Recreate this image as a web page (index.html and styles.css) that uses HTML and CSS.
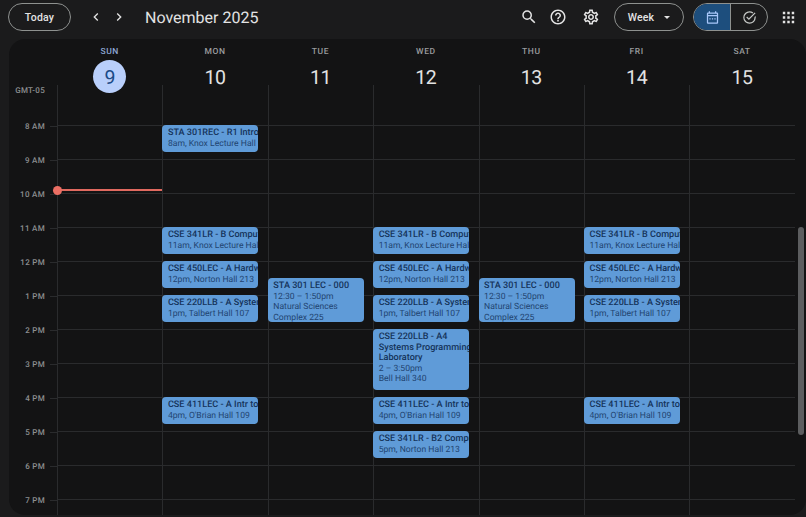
FILE: index.html
```html
<!DOCTYPE html>
<html lang="en">
<head>
  <meta charset="UTF-8" />
  <meta name="viewport" content="width=device-width, initial-scale=1.0" />
  <title>Calendar - Week</title>
  <link rel="stylesheet" href="styles.css">
</head>
<body>
  <header class="topbar">
    <button class="pill today">Today</button>
    <div class="nav-arrows">
      <svg viewBox="0 0 24 24"><path d="M15.4 7.4 14 6l-6 6 6 6 1.4-1.4-4.6-4.6z"/></svg>
      <svg viewBox="0 0 24 24"><path d="M8.6 16.6 10 18l6-6-6-6-1.4 1.4 4.6 4.6z"/></svg>
    </div>
    <h1 class="month">November 2025</h1>
    <div class="tools">
      <svg class="tool search" viewBox="0 0 24 24"><path d="M15.5 14h-.79l-.28-.27A6.471 6.471 0 0 0 16 9.5 6.5 6.5 0 1 0 9.5 16c1.61 0 3.09-.59 4.23-1.57l.27.28v.79l5 4.99L20.49 19l-4.99-5zm-6 0C7.01 14 5 11.99 5 9.5S7.01 5 9.5 5 14 7.01 14 9.5 11.99 14 9.5 14z"/></svg>
      <svg class="tool" viewBox="0 0 24 24"><path d="M11 18h2v-2h-2v2zm1-16C6.48 2 2 6.48 2 12s4.48 10 10 10 10-4.48 10-10S17.52 2 12 2zm0 18c-4.41 0-8-3.59-8-8s3.59-8 8-8 8 3.59 8 8-3.59 8-8 8zm0-14c-2.21 0-4 1.79-4 4h2c0-1.1.9-2 2-2s2 .9 2 2c0 2-3 1.75-3 5h2c0-2.25 3-2.5 3-5 0-2.21-1.79-4-4-4z"/></svg>
      <svg class="tool" viewBox="0 0 24 24"><path d="M19.43 12.98c.04-.32.07-.64.07-.98 0-.34-.03-.66-.07-.98l2.11-1.65c.19-.15.24-.42.12-.64l-2-3.46c-.09-.16-.26-.25-.44-.25-.06 0-.12.01-.17.03l-2.49 1c-.52-.4-1.08-.73-1.69-.98l-.38-2.65C14.46 2.18 14.25 2 14 2h-4c-.25 0-.46.18-.49.42l-.38 2.65c-.61.25-1.17.59-1.69.98l-2.49-1c-.06-.02-.12-.03-.18-.03-.17 0-.34.09-.43.25l-2 3.46c-.13.22-.07.49.12.64l2.11 1.65c-.04.32-.07.65-.07.98 0 .33.03.66.07.98l-2.11 1.65c-.19.15-.24.42-.12.64l2 3.46c.09.16.26.25.44.25.06 0 .12-.01.17-.03l2.49-1c.52.4 1.08.73 1.69.98l.38 2.65c.03.24.24.42.49.42h4c.25 0 .46-.18.49-.42l.38-2.65c.61-.25 1.17-.59 1.69-.98l2.49 1c.06.02.12.03.18.03.17 0 .34-.09.43-.25l2-3.46c.12-.22.07-.49-.12-.64l-2.11-1.65zm-1.98-1.71c.04.31.05.52.05.73 0 .21-.02.43-.05.73l-.14 1.13.89.7 1.08.84-.7 1.21-1.27-.51-1.04-.42-.9.68c-.43.32-.84.56-1.25.73l-1.06.43-.16 1.13-.2 1.35h-1.4l-.19-1.35-.16-1.13-1.06-.43c-.43-.18-.83-.41-1.23-.71l-.91-.7-1.06.43-1.27.51-.7-1.21 1.08-.84.89-.7-.14-1.13c-.03-.31-.05-.54-.05-.74s.02-.43.05-.73l.14-1.13-.89-.7-1.08-.84.7-1.21 1.27.51 1.04.42.9-.68c.43-.32.84-.56 1.25-.73l1.06-.43.16-1.13.2-1.35h1.39l.19 1.35.16 1.13 1.06.43c.43.18.83.41 1.23.71l.91.7 1.06-.43 1.27-.51.7 1.21-1.07.85-.89.7.14 1.13zM12 8c-2.21 0-4 1.79-4 4s1.79 4 4 4 4-1.79 4-4-1.79-4-4-4zm0 6c-1.1 0-2-.9-2-2s.9-2 2-2 2 .9 2 2-.9 2-2 2z"/></svg>
    </div>
    <button class="pill week">Week<span class="caret"></span></button>
    <div class="switch">
      <span class="switch-part on">
        <svg viewBox="0 0 24 24"><path d="M5 22c-1.100 0-2-.9-2-2V6c0-1.100.9-2 2-2h1V2h2v2h8V2h2v2h1c1.100 0 2 .9 2 2v14c0 1.100-.9 2-2 2H5zm0-2h14V10H5v10zM5 8h14V6H5v2zm2 5h2v2H7zm4 0h2v2h-2zm4 0h2v2h-2z"/></svg>
      </span>
      <span class="switch-part">
        <svg viewBox="0 0 24 24"><path d="M12 2a10 10 0 1 0 10 10c0-.9-.1-1.700-.3-2.500l-1.700 1.700c0 .3 0 .5 0 .8a8 8 0 1 1-3.300-6.500l1.400-1.400A9.900 9.900 0 0 0 12 2zm8.300 1.900L11 13.200 8.200 10.400 6.800 11.800 11 16l10.700-10.700z"/></svg>
      </span>
    </div>
    <svg class="apps" viewBox="0 0 16 16"><path d="M1 1h3v3H1zM6.500 1h3v3h-3zM12 1h3v3h-3zM1 6.500h3v3H1zM6.500 6.500h3v3h-3zM12 6.500h3v3h-3zM1 12h3v3H1zM6.500 12h3v3h-3zM12 12h3v3h-3z"/></svg>
  </header>

  <main class="panel">
    <div class="week-head">
      <div class="day-head today-col"><span class="dow">Sun</span><span class="date">9</span></div>
      <div class="day-head"><span class="dow">Mon</span><span class="date">10</span></div>
      <div class="day-head"><span class="dow">Tue</span><span class="date">11</span></div>
      <div class="day-head"><span class="dow">Wed</span><span class="date">12</span></div>
      <div class="day-head"><span class="dow">Thu</span><span class="date">13</span></div>
      <div class="day-head"><span class="dow">Fri</span><span class="date">14</span></div>
      <div class="day-head"><span class="dow">Sat</span><span class="date">15</span></div>
    </div>

    <div class="week-grid">
      <div class="times">
        <span class="tz">GMT-05</span>
        <div class="hour"><span>8 AM</span></div>
        <div class="hour"><span>9 AM</span></div>
        <div class="hour"><span>10 AM</span></div>
        <div class="hour"><span>11 AM</span></div>
        <div class="hour"><span>12 PM</span></div>
        <div class="hour"><span>1 PM</span></div>
        <div class="hour"><span>2 PM</span></div>
        <div class="hour"><span>3 PM</span></div>
        <div class="hour"><span>4 PM</span></div>
        <div class="hour"><span>5 PM</span></div>
        <div class="hour"><span>6 PM</span></div>
        <div class="hour"><span>7 PM</span></div>
      </div>

      <!-- Sunday -->
      <div class="day">
        <div class="now-line" style="top: 104px"></div>
      </div>

      <!-- Monday -->
      <div class="day">
        <div class="event" style="top: 40px; height: 27px"><b>STA 301REC - R1 Intro to Probability</b><span>8am, Knox Lecture Hall 110</span></div>
        <div class="event" style="top: 142px; height: 27px"><b>CSE 341LR - B Computer Organization</b><span>11am, Knox Lecture Hall 110</span></div>
        <div class="event" style="top: 176px; height: 27px"><b>CSE 450LEC - A Hardware</b><span>12pm, Norton Hall 213</span></div>
        <div class="event" style="top: 210px; height: 27px"><b>CSE 220LLB - A Systems Programming</b><span>1pm, Talbert Hall 107</span></div>
        <div class="event" style="top: 312px; height: 27px"><b>CSE 411LEC - A Intr to Networks</b><span>4pm, O'Brian Hall 109</span></div>
      </div>

      <!-- Tuesday -->
      <div class="day">
        <div class="event" style="top: 193px; height: 44px"><b>STA 301 LEC - 000</b><span>12:30 – 1:50pm</span><span class="wrap">Natural Sciences Complex 225</span></div>
      </div>

      <!-- Wednesday -->
      <div class="day">
        <div class="event" style="top: 142px; height: 27px"><b>CSE 341LR - B Computer Organization</b><span>11am, Knox Lecture Hall 110</span></div>
        <div class="event" style="top: 176px; height: 27px"><b>CSE 450LEC - A Hardware</b><span>12pm, Norton Hall 213</span></div>
        <div class="event" style="top: 210px; height: 27px"><b>CSE 220LLB - A Systems Programming</b><span>1pm, Talbert Hall 107</span></div>
        <div class="event" style="top: 244px; height: 61px"><b class="wrap">CSE 220LLB - A4 Systems Programming Laboratory</b><span>2 – 3:50pm</span><span>Bell Hall 340</span></div>
        <div class="event" style="top: 312px; height: 27px"><b>CSE 411LEC - A Intr to Networks</b><span>4pm, O'Brian Hall 109</span></div>
        <div class="event" style="top: 346px; height: 27px"><b>CSE 341LR - B2 Computer Organization</b><span>5pm, Norton Hall 213</span></div>
      </div>

      <!-- Thursday -->
      <div class="day">
        <div class="event" style="top: 193px; height: 44px"><b>STA 301 LEC - 000</b><span>12:30 – 1:50pm</span><span class="wrap">Natural Sciences Complex 225</span></div>
      </div>

      <!-- Friday -->
      <div class="day">
        <div class="event" style="top: 142px; height: 27px"><b>CSE 341LR - B Computer Organization</b><span>11am, Knox Lecture Hall 110</span></div>
        <div class="event" style="top: 176px; height: 27px"><b>CSE 450LEC - A Hardware</b><span>12pm, Norton Hall 213</span></div>
        <div class="event" style="top: 210px; height: 27px"><b>CSE 220LLB - A Systems Programming</b><span>1pm, Talbert Hall 107</span></div>
        <div class="event" style="top: 312px; height: 27px"><b>CSE 411LEC - A Intr to Networks</b><span>4pm, O'Brian Hall 109</span></div>
      </div>

      <!-- Saturday -->
      <div class="day"></div>
    </div>

    <div class="scrollbar"></div>
  </main>
</body>
</html>
```

FILE: styles.css
```css
* {
  box-sizing: border-box;
}
body {
  margin: 0;
  height: 517px;
  overflow: hidden;
  background: #1b1b1c;
  color: #e3e3e3;
  font-family: 'Roboto', 'Liberation Sans', sans-serif;
  text-rendering: geometricPrecision;
}

/* Top bar */
.topbar {
  display: flex;
  align-items: center;
  height: 39px;
  padding: 0 0 5px 8px;
}
.pill {
  height: 28px;
  border: 1px solid #8e918f;
  border-radius: 14px;
  background: none;
  color: #e3e3e3;
  font: 500 10.5px 'Roboto', sans-serif;
  letter-spacing: 0.2px;
  padding: 0;
}
.today {
  width: 63px;
}
.nav-arrows {
  display: flex;
  gap: 7px;
  margin-left: 17px;
}
.nav-arrows svg {
  width: 16px;
  height: 16px;
  fill: #e3e3e3;
}
.month {
  margin: 0 0 0 18px;
  font-size: 16px;
  font-weight: 400;
  color: #e3e3e3;
}
.tools {
  display: flex;
  align-items: center;
  gap: 15px;
  margin-left: auto;
}
.tool {
  width: 18px;
  height: 18px;
  fill: #e3e3e3;
}
.search {
  margin-right: -4px;
}
.week {
  width: 70px;
  margin-left: 14px;
  display: flex;
  align-items: center;
  justify-content: center;
}
.caret {
  margin-left: 10px;
  border-top: 3px solid #e3e3e3;
  border-left: 3px solid transparent;
  border-right: 3px solid transparent;
}
.switch {
  display: flex;
  width: 75px;
  height: 28px;
  margin-left: 9px;
  border: 1px solid #8e918f;
  border-radius: 14px;
  overflow: hidden;
}
.switch-part {
  flex: 1;
  display: flex;
  align-items: center;
  justify-content: center;
}
.switch-part.on {
  flex: none;
  width: 37px;
  background: #1d4e7d;
  border-right: 1px solid #8e918f;
}
.switch-part svg {
  width: 15px;
  height: 15px;
  fill: #c4c7c5;
}
.switch-part.on svg {
  fill: #a8c7fa;
}
.apps {
  width: 13px;
  height: 13px;
  margin: 0 11px 0 14px;
  fill: #e3e3e3;
}

/* Calendar panel */
.panel {
  position: relative;
  height: 476px;
  margin-left: 9px;
  padding-left: 48px;
  background: #131314;
  border-radius: 16px;
  overflow: hidden;
}
.week-head {
  display: grid;
  grid-template-columns: repeat(7, 105.4px);
  height: 46px;
}
.day-head {
  position: relative;
  z-index: 1;
  display: flex;
  flex-direction: column;
  align-items: center;
  height: 55px;
}
.dow {
  margin-top: 8px;
  font-size: 8.5px;
  font-weight: 500;
  line-height: 11px;
  letter-spacing: 0.6px;
  text-transform: uppercase;
  color: #9a9c9e;
}
.date {
  width: 33px;
  height: 33px;
  margin-top: 2px;
  border-radius: 50%;
  font-size: 19.5px;
  letter-spacing: -0.4px;
  line-height: 35px;
  text-align: center;
  color: #e3e3e3;
}
.today-col .dow {
  color: #8fa8d4;
}
.today-col .date {
  background: #b9cffb;
  color: #1c4a86;
}

/* Time grid */
.week-grid {
  display: grid;
  grid-template-columns: repeat(7, 105.4px);
  position: relative;
  height: 430px;
}
.times {
  position: absolute;
  right: 100%;
  top: 0;
  width: 48px;
  padding-top: 40.5px;
}
.tz {
  position: absolute;
  top: 0;
  right: 12px;
  font-size: 8px;
  font-weight: 500;
  line-height: 11px;
  letter-spacing: 0.3px;
  color: #8d8f91;
}
.hour {
  height: 34px;
  position: relative;
  text-align: right;
  padding-right: 12px;
}
.hour::after {
  content: '';
  position: absolute;
  top: 0;
  right: 0;
  width: 7px;
  border-top: 1px solid #2a2b2d;
}
.hour span {
  display: block;
  transform: translateY(-5px);
  font-size: 8px;
  font-weight: 500;
  line-height: 11px;
  letter-spacing: 0.3px;
  color: #8d8f91;
}
.day {
  position: relative;
  border-left: 1px solid #2a2b2d;
  padding-top: 40px;
  background-image: linear-gradient(#2a2b2d 1px, transparent 1px);
  background-size: 100% 34px;
  background-origin: content-box;
  background-clip: content-box;
}
.event {
  position: absolute;
  left: -1px;
  width: 96px;
  padding: 3px 0 0 5.5px;
  overflow: hidden;
  background: #5f9bd8;
  border-radius: 4px;
  font-size: 8.6px;
  line-height: 10.6px;
  color: #1f4470;
}
.event b {
  display: block;
  font-size: 9.1px;
  font-weight: 500;
  white-space: nowrap;
  color: #15335a;
}
.event b.wrap {
  margin-right: -6px;
}
.event span {
  display: block;
  white-space: nowrap;
}
.event .wrap {
  white-space: normal;
}
.now-line {
  position: absolute;
  left: 0;
  right: 0;
  height: 2px;
  background: #e0695f;
}
.now-line::before {
  content: '';
  position: absolute;
  left: -5px;
  top: -3.5px;
  width: 9px;
  height: 9px;
  border-radius: 50%;
  background: #ec6f64;
}
.scrollbar {
  position: absolute;
  right: 2px;
  top: 188px;
  width: 6px;
  height: 208px;
  border-radius: 3px;
  background: #5c5d5f;
}
```
